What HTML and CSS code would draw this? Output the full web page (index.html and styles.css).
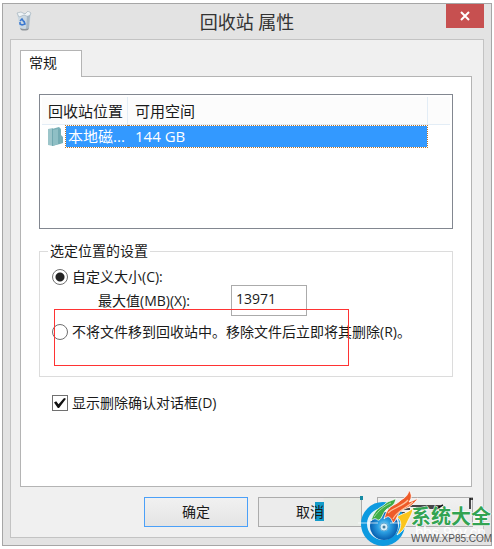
FILE: index.html
```html
<!DOCTYPE html>
<html lang="zh-CN">
<head>
<meta charset="utf-8">
<title>回收站 属性</title>
<link rel="stylesheet" href="styles.css">
</head>
<body>
<main class="window">
  <header class="titlebar">
    <svg class="bin" viewBox="0 0 16 20" aria-hidden="true">
      <path d="M1 2 L15 2 L13 18 Q8 20 4 18 Z" fill="#cbd8e2"/>
      <path d="M1 2 L5 1 L9 3 L12 0 L15 2 L13 6 L8 4 L3 6 Z" fill="#eef3f6" stroke="#9cabb6" stroke-width=".6"/>
      <path d="M11 5 L14 4 L13 17 L10 18 Z" fill="#a9b8c4"/>
      <path d="M4 17 Q8 19 13 17 L12 19 Q8 20 5 19 Z" fill="#8e9499"/>
      <path d="M4 10 L6 8 L8 11 M8 10 L9 13 L6 14 M4 11 L4 13 L6 14" fill="none" stroke="#3a78d0" stroke-width="1.500"/>
    </svg>
    <h1 class="title">回收站 属性</h1>
    <button class="close" type="button" aria-label="关闭">
      <svg viewBox="0 0 10 10" aria-hidden="true"><path d="M1 1 L9 9 M9 1 L1 9" stroke="#fff" stroke-width="2"/></svg>
    </button>
  </header>
  <form class="frame">
    <div class="tabs"><button class="tab" type="button">常规</button></div>
    <section class="panel">
      <div class="list">
        <table class="table">
          <thead>
            <tr><th class="col-name">回收站位置</th><th class="col-space">可用空间</th><th class="col-rest"></th></tr>
          </thead>
          <tbody>
            <tr>
              <td class="cell-name">
                <div class="drive">
                  <svg class="drive-icon" viewBox="0 0 16 20" aria-hidden="true">
                    <path d="M1 2 L6 1 L6 19 L1 18 Z" fill="#9cc5ca"/>
                    <path d="M5 2 L12 0 L14 2 L14 8 L16 10 L16 16 L13 17 L5 19 Z" fill="#79b0b7"/>
                    <path d="M6 3 L11 2 L11 17 L6 19 Z" fill="#8fbfc5"/>
                    <path d="M5.500 2 V19 M12 2 V17" stroke="#6fa5ad" stroke-width=".7"/>
                  </svg>
                  <span class="drive-name">本地磁...</span>
                </div>
              </td>
              <td class="cell-space">144 GB</td>
              <td></td>
            </tr>
          </tbody>
        </table>
      </div>
      <fieldset class="group">
        <legend>选定位置的设置</legend>
        <div class="row">
          <input class="radio" type="radio" name="mode" id="custom" checked>
          <label for="custom">自定义大小(C):</label>
        </div>
        <div class="row size-row">
          <label for="max">最大值(MB)(X):</label>
          <input class="size" type="text" id="max" value="13971">
        </div>
        <div class="row last-row">
          <input class="radio" type="radio" name="mode" id="remove">
          <label for="remove">不将文件移到回收站中。移除文件后立即将其删除(R)。</label>
        </div>
        <div class="highlight"></div>
      </fieldset>
      <div class="row confirm">
        <input class="check" type="checkbox" id="confirm" checked>
        <label for="confirm">显示删除确认对话框(D)</label>
      </div>
    </section>
    <footer class="actions">
      <button class="btn primary" type="button">确定</button>
      <button class="btn cancel" type="button">取<span class="tint">消</span></button>
      <button class="btn apply" type="button" aria-label="应用"></button>
    </footer>
  </form>
  <svg class="watermark" viewBox="358 488 136 61" role="img" aria-label="系统大全">
    <defs>
      <radialGradient id="disc"><stop offset="0" stop-color="#8ed8f6"/><stop offset=".45" stop-color="#2b9fe2"/><stop offset="1" stop-color="#075fb0"/></radialGradient>
    </defs>
    <path d="M360 496 H363 V500 H360 Z" fill="#168aa3"/>
    <path d="M404 506 H442 M401 509 H410 M416 508 H440 M399 513 H405 M433 511 L443 505 M470 498 V509 M470 499 H473" fill="none" stroke="#111" stroke-width="1.500"/>
    <circle cx="383" cy="524" r="19" fill="#e3f3fb" stroke="#0d9ae0" stroke-width="6"/>
    <circle cx="384" cy="526" r="14" fill="url(#disc)"/>
    <circle cx="384" cy="527" r="4" fill="#d9eef8" stroke="#5fa9d6"/>
    <circle cx="384" cy="527" r="1.500" fill="#477d9c"/>
    <path d="M358 523 H378 M390 523 H406" stroke="#fff" stroke-opacity=".7"/>
    <path d="M371 521 C375 507 382 508 386 503 C390 500 393 501 396 498 C395 505 392 506 387 509 C383 512 382 519 379 520 C377 521 376 516 371 521 Z" fill="#3fae48" stroke="#fff" stroke-width=".8"/>
    <path d="M374 517 C379 510 384 506 391 503" fill="none" stroke="#a4dfa5"/>
    <path d="M384 519 C388 504 394 507 401 500 C406 497 408 495 409 490 C413 496 411 499 409 502 C412 501 415 500 418 498 C414 505 408 508 402 510 C398 512 396 522 393 523 C391 518 389 514 384 519 Z" fill="#ee5a29" stroke="#fff" stroke-width=".8"/>
    <path d="M388 513 C394 507 402 507 408 500 M393 519 C397 511 406 508 413 502" fill="none" stroke="#ffc19a" stroke-width="1.200"/>
    <path d="M397 517 C402 513 406 514 413 508 C413 513 409 518 407 523 C405 528 402 532 397 535 C402 526 402 521 397 517 Z" fill="#fbc51c" stroke="#fff" stroke-width=".8"/>
    <text class="mark-ghost" x="415" y="537">bbs.9xy.cn</text>
    <text class="mark-name" x="411" y="524">系统大全</text>
    <text class="mark-url" x="411" y="542">WWW.XP85.COM</text>
  </svg>
</main>
</body>
</html>
```
FILE: styles.css
```css
* { box-sizing: border-box; }

body {
  margin: 3px 2px;
  background: #fff;
  color: #1a1a1a;
  font: 14px/20px "Open Sans", "Noto Sans CJK SC", sans-serif;
}

button, input { font: inherit; color: inherit; }

.window {
  position: relative;
  padding: 0 7px 7px;
  border: 1px solid #a6a6a6;
  background: #e3e3e3;
}

.titlebar {
  display: grid;
  grid-template-columns: 38px 1fr 38px;
  height: 35px;
}

.bin {
  width: 16px;
  height: 20px;
  margin: 7px 0 0 6px;
}

.title {
  margin: 0;
  font-size: 18px;
  font-weight: 400;
  line-height: 36px;
  text-align: center;
  color: #333;
}

.close {
  display: flex;
  align-items: center;
  justify-content: center;
  width: 38px;
  height: 24px;
  padding: 0;
  border: 0;
  background: #c75050;
}

.close svg { width: 10px; height: 10px; }

.frame {
  padding: 10px 11px 10px 9px;
  border: 1px solid #c3c3c3;
  background: #f0f0f0;
}

.tabs { display: flex; }

.tab {
  position: relative;
  z-index: 1;
  width: 62px;
  height: 27px;
  margin-bottom: -1px;
  padding: 0 6px 2px 8px;
  border: 1px solid #b4b4b4;
  border-bottom: 0;
  background: #fff;
  text-align: left;
}

.panel {
  padding: 17px 18px 73px;
  border: 1px solid #b4b4b4;
  background: #fff;
}

.list {
  height: 135px;
  padding: 2px;
  border: 1px solid #828790;
  font-size: 15px;
}

.table {
  width: 100%;
  table-layout: fixed;
  border-collapse: separate;
  border-spacing: 0;
}

.table th, .table td {
  padding: 0;
  font-weight: 400;
  text-align: left;
  white-space: nowrap;
}

.table th {
  height: 28px;
  border-right: 1px solid #e3edf6;
  border-bottom: 1px solid #e3edf6;
  background: #fcfcfc;
}

.table .col-name { width: 86px; padding-left: 6px; }
.table .col-space { padding-left: 7px; }
.table .col-rest { width: 22px; border-right: 0; }

.drive { display: flex; align-items: center; gap: 2px; padding-left: 5px; }
.drive-icon { width: 16px; height: 20px; flex: none; }

.drive-name, .table .cell-space {
  height: 23px;
  border: 1px dotted #b8742e;
  background: #3399ff;
  background-clip: padding-box;
  color: #fff;
  line-height: 21px;
}

.drive-name { flex: 1; padding-left: 2px; border-right: 0; }
.table .cell-space { padding-left: 7px; border-left: 0; }

.group {
  position: relative;
  margin: 12px 0 0;
  padding: 6px 11px 34px 12px;
  border: 1px solid #dcdcdc;
}

.group legend { margin-left: -4px; padding: 0 2px; }

.row { display: flex; align-items: center; gap: 4px; }

.size-row {
  gap: 41px;
  height: 31px;
  margin-top: -2px;
  padding-left: 46px;
}

.size {
  width: 76px;
  height: 31px;
  padding: 0 4px 4px;
  border: 1px solid #ababab;
  background: #fff;
}

.last-row { margin-top: 6px; white-space: nowrap; }

.radio, .check {
  flex: none;
  appearance: none;
  width: 16px;
  height: 16px;
  margin: 0;
  border: 1px solid #707070;
  background: #fff;
}

.radio { border-radius: 50%; }
.radio:checked { background: radial-gradient(circle, #222 4px, #fff 5px); }

.check:checked {
  display: grid;
  place-items: center;
}

.check:checked::after {
  content: "";
  width: 12px;
  height: 10px;
  background: #111;
  clip-path: polygon(0 45%, 18% 32%, 38% 62%, 84% 0, 100% 8%, 42% 100%, 32% 100%);
}

.highlight {
  position: absolute;
  top: 48px;
  left: 14px;
  width: 295px;
  height: 57px;
  border: 1px solid #f33;
  pointer-events: none;
}

.confirm { margin-top: 16px; padding-left: 13px; }

.actions {
  display: flex;
  justify-content: flex-end;
  gap: 10px;
  margin-top: 10px;
}

.btn {
  width: 104px;
  height: 30px;
  padding: 0;
  border: 1px solid #acacac;
  background: linear-gradient(#f1f1f1, #e4e4e4);
}

.primary { border-color: #4ba0f8; }
.cancel { background: linear-gradient(90deg, #ececec 64px, #e7ebe6 65px); }
.tint { background: linear-gradient(90deg, transparent 5px, #139bc9 5px); }
.apply { width: 96px; margin-left: 5px; margin-right: -1px; }

.watermark {
  position: absolute;
  right: -3px;
  bottom: -4px;
  width: 136px;
  height: 61px;
}

.mark-name {
  font: 700 20px "Noto Sans CJK SC", sans-serif;
  fill: #32a352;
  stroke: #fff;
  stroke-width: 1px;
  paint-order: stroke;
}

.mark-ghost { font: 15px "Liberation Sans", sans-serif; fill: #fff; }
.mark-url { font: 10px "Liberation Sans", sans-serif; fill: #555; }
```
